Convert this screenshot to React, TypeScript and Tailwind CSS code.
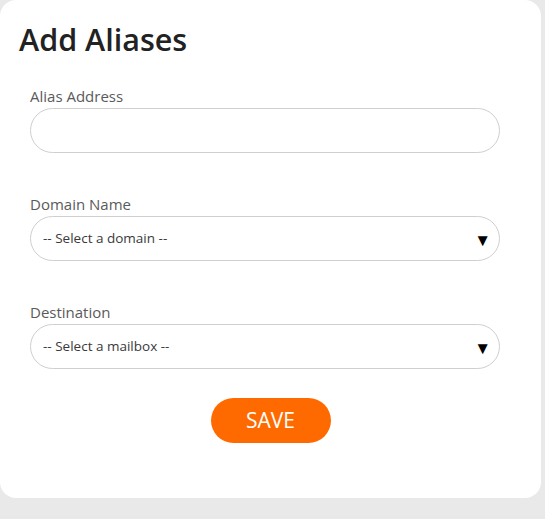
export default function App() {
  return (
    <div className="min-h-[519px] w-[545px] bg-[#e9e9e9] font-['Open_Sans',sans-serif]">
      <div className="h-[498px] w-[541px] rounded-2xl bg-white pl-[30px] pr-[41px] pt-[19px]">
        {/* Heading */}
        <h1 className="-ml-[11px] text-[30.5px] font-semibold leading-[40px] text-[#222]">Add Aliases</h1>

        <form className="mt-[27px]" onSubmit={(e) => e.preventDefault()}>
          <label className="block text-[15px] leading-[20px] text-[#5a5a5a]">Alias Address</label>
          <input
            type="text"
            className="mt-[2px] block h-[45px] w-full rounded-full border border-[#cfcfcf] px-[13px] text-[13px] outline-none"
          />

          <label className="mt-[41px] block text-[15px] leading-[20px] text-[#5a5a5a]">Domain Name</label>
          <div className="relative mt-[2px]">
            <select className="block h-[45px] w-full appearance-none rounded-full border border-[#cfcfcf] bg-white px-[12px] text-[13.5px] text-[#3a3a3a] outline-none">
              <option>-- Select a domain --</option>
            </select>
            <span className="pointer-events-none absolute right-[9px] top-1/2 -translate-y-1/2 text-[17px] leading-none text-black">▼</span>
          </div>

          <label className="mt-[41px] block text-[15px] leading-[20px] text-[#5a5a5a]">Destination</label>
          <div className="relative mt-[2px]">
            <select className="block h-[45px] w-full appearance-none rounded-full border border-[#cfcfcf] bg-white px-[12px] text-[13.5px] text-[#3a3a3a] outline-none">
              <option>-- Select a mailbox --</option>
            </select>
            <span className="pointer-events-none absolute right-[9px] top-1/2 -translate-y-1/2 text-[17px] leading-none text-black">▼</span>
          </div>

          <div className="-ml-[30px] -mr-[41px] mt-[29px] flex justify-center">
            <button
              type="submit"
              className="h-[45px] w-[120px] rounded-full bg-[#ff6a00] text-[21px] text-white"
            >
              SAVE
            </button>
          </div>
        </form>
      </div>
    </div>
  );
}
